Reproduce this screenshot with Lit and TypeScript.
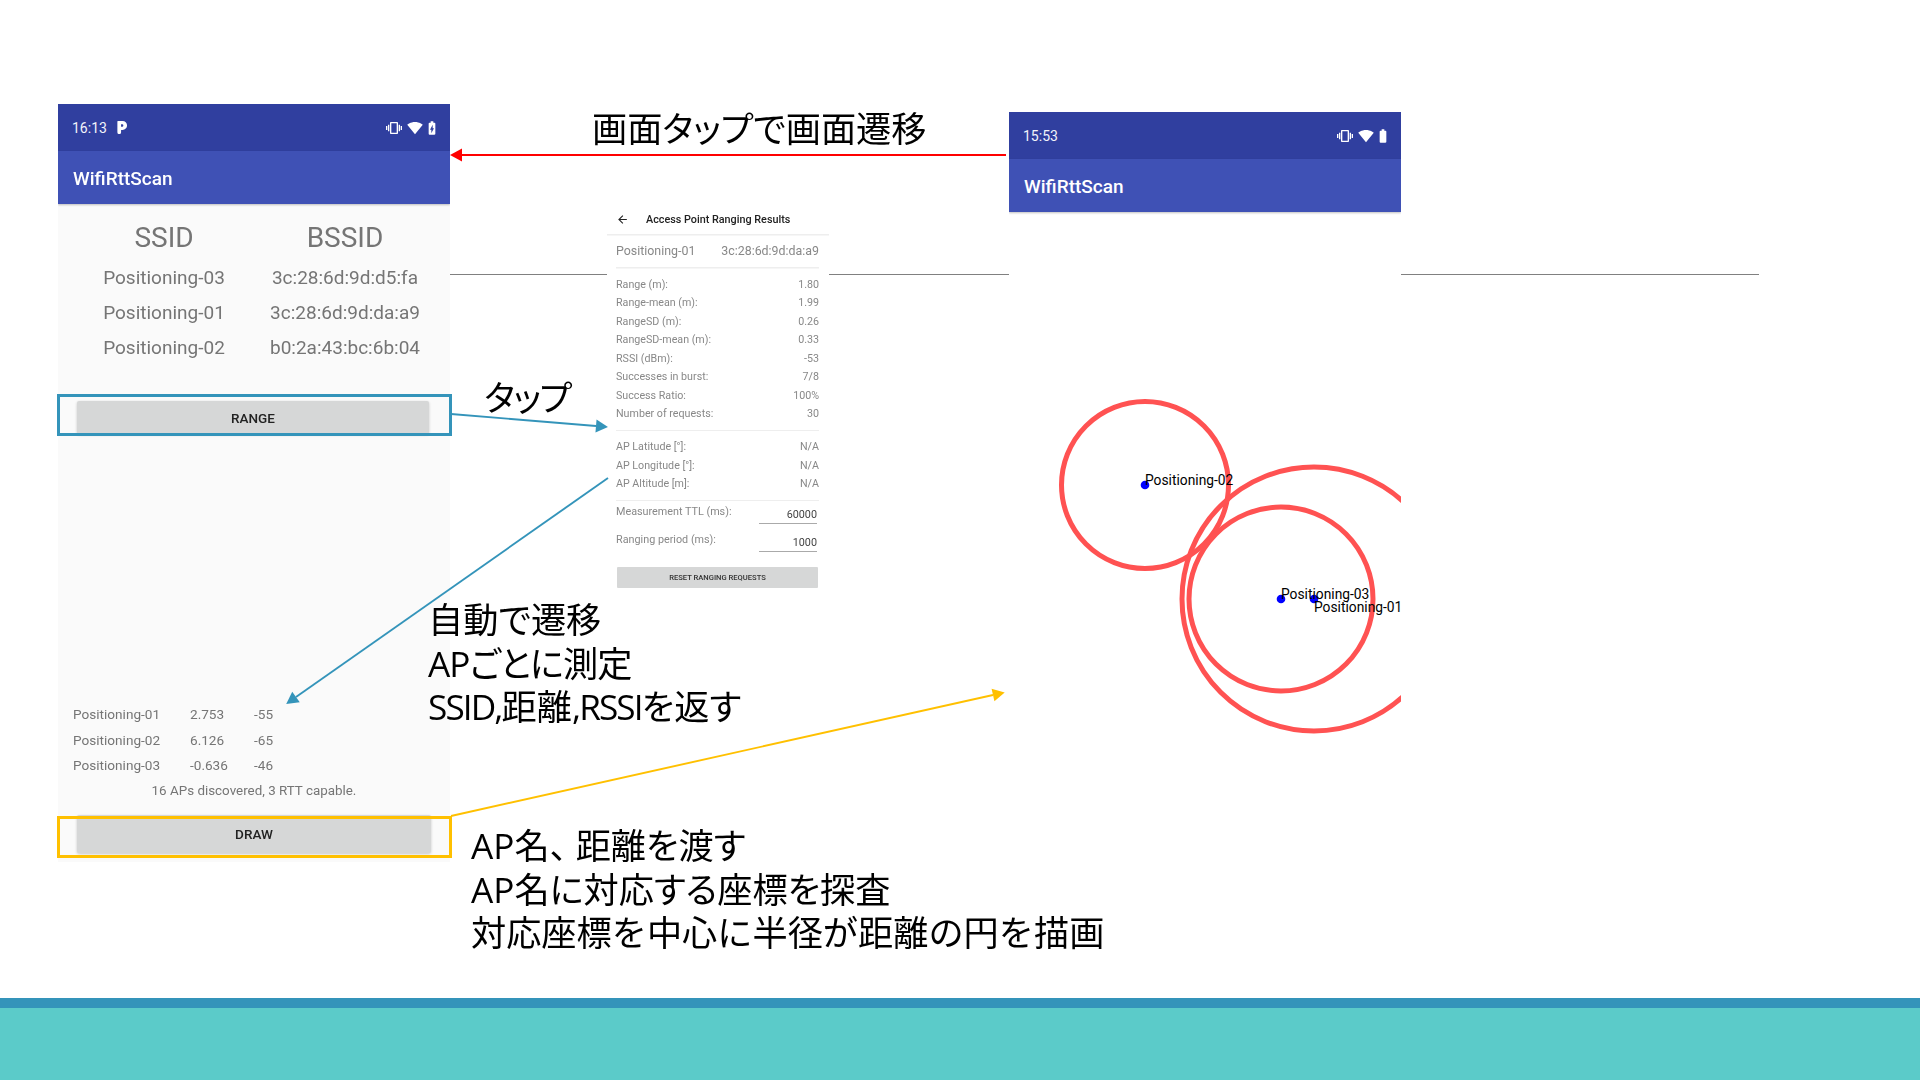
import { LitElement, css, html, svg } from 'lit';
import { customElement } from 'lit/decorators.js';

const VIBRATE = 'M0 15h2V9H0v6zm3 2h2V7H3v10zm19-8v6h2V9h-2zm-3 8h2V7h-2v10zM16.5 3h-9C6.67 3 6 3.67 6 4.5v15c0 .83.67 1.5 1.5 1.5h9c.83 0 1.5-.67 1.5-1.5v-15c0-.83-.67-1.5-1.5-1.5zM16 19H8V5h8v14z';
const WIFI = 'M12.01 21.49L23.64 7c-.45-.34-4.93-4-11.64-4C5.28 3 .81 6.66.36 7l11.63 14.49.01.01.01-.01z';
const BATTERY = 'M15.67 4H14V2h-4v2H8.33C7.6 4 7 4.6 7 5.33v15.33C7 21.4 7.6 22 8.33 22h7.33c.74 0 1.34-.6 1.34-1.33V5.33C17 4.6 16.4 4 15.67 4z';
const BOLT = 'M11 20v-5.5H9L13 7v5.5h2L11 20z';

const APS = [
  ['Positioning-03', '3c:28:6d:9d:d5:fa'],
  ['Positioning-01', '3c:28:6d:9d:da:a9'],
  ['Positioning-02', 'b0:2a:43:bc:6b:04'],
];

const RESULTS = [
  ['Positioning-01', '2.753', '-55'],
  ['Positioning-02', '6.126', '-65'],
  ['Positioning-03', '-0.636', '-46'],
];

const STATS = [
  ['Range (m):', '1.80'],
  ['Range-mean (m):', '1.99'],
  ['RangeSD (m):', '0.26'],
  ['RangeSD-mean (m):', '0.33'],
  ['RSSI (dBm):', '-53'],
  ['Successes in burst:', '7/8'],
  ['Success Ratio:', '100%'],
  ['Number of requests:', '30'],
];

const LOCATION = [
  ['AP Latitude [°]:', 'N/A'],
  ['AP Longitude [°]:', 'N/A'],
  ['AP Altitude [m]:', 'N/A'],
];

// circle centres are in the map's own coordinates (map starts at 1009,211)
const MARKS = [
  { name: 'Positioning-02', x: 136, y: 273, r: 83.5, dy: -0.5 },
  { name: 'Positioning-03', x: 272, y: 387, r: 92, dy: 0 },
  { name: 'Positioning-01', x: 305, y: 387, r: 132, dy: 13 },
];

const ARROWS = [
  { x1: 1006, y1: 155, x2: 462, y2: 155, color: '#ff0000' },
  { x1: 451, y1: 414, x2: 596, y2: 426, color: '#3494ba' },
  { x1: 608, y1: 478, x2: 296, y2: 697, color: '#3494ba' },
  { x1: 451, y1: 816, x2: 993, y2: 695, color: '#ffc000' },
];

@customElement('app-root')
export class AppRoot extends LitElement {
  private statusBar(time: string, charging: boolean) {
    return html`
      <div class="status">
        <span class="time">${time}</span>
        ${charging ? html`
          <svg class="parking" viewBox="0 0 10 12"><path fill-rule="evenodd" fill="#fff" d="M1.6 0H6a4 4 0 0 1 0 8.2H4.6v2.2a1.7 1.7 0 0 1-3.4 0V.6Q1.2 0 1.6 0zM4.6 3v2.2h1a1.1 1.1 0 0 0 0-2.2z"/></svg>
        ` : ''}
        <span class="status-icons">
          <svg class="vib" viewBox="0 0 24 24"><path fill="#fff" d=${VIBRATE}></path></svg>
          <svg class="ico" viewBox="0 0 24 24"><path fill="#fff" d=${WIFI}></path></svg>
          <svg class="batt" viewBox="0 0 24 24">
            <path fill="#fff" d=${BATTERY}></path>
            ${charging ? svg`<path fill="#303f9f" d=${BOLT}></path>` : ''}
          </svg>
        </span>
      </div>
      <div class="appbar">WifiRttScan</div>
    `;
  }

  private renderScanner() {
    return html`
      <section class="phone scanner">
        ${this.statusBar('16:13', true)}
        <div class="body">
          <div class="ap-table">
            <div class="ap-head">SSID</div>
            <div class="ap-head">BSSID</div>
            ${APS.map(([ssid, bssid]) => html`<div>${ssid}</div><div>${bssid}</div>`)}
          </div>
          <div class="btn range">RANGE</div>
          <div class="results">
            ${RESULTS.map(([name, dist, rssi]) => html`<div>${name}</div><div>${dist}</div><div>${rssi}</div>`)}
          </div>
          <div class="found">16 APs discovered, 3 RTT capable.</div>
          <div class="btn draw">DRAW</div>
        </div>
      </section>
    `;
  }

  private renderRanging() {
    return html`
      <section class="ranging">
        <div class="rng-bar">
          <svg class="back" viewBox="0 0 24 24"><path fill="#222" d="M20 11H7.83l5.59-5.59L12 4l-8 8 8 8 1.41-1.41L7.83 13H20v-2z"></path></svg>
          <span>Access Point Ranging Results</span>
        </div>
        <div class="rng-inner">
          <div class="rng-ap"><span>Positioning-01</span><span>3c:28:6d:9d:da:a9</span></div>
          <div class="rng-list first">
            ${STATS.map(([k, v]) => html`<div class="rng-row"><span>${k}</span><span>${v}</span></div>`)}
          </div>
          <div class="rng-list second">
            ${LOCATION.map(([k, v]) => html`<div class="rng-row"><span>${k}</span><span>${v}</span></div>`)}
          </div>
          <div class="rng-field"><span>Measurement TTL (ms):</span><span class="input">60000</span></div>
          <div class="rng-field"><span>Ranging period (ms):</span><span class="input">1000</span></div>
          <div class="reset">RESET RANGING REQUESTS</div>
        </div>
      </section>
    `;
  }

  private renderMap() {
    return html`
      <section class="phone map">
        ${this.statusBar('15:53', false)}
        <svg class="map-canvas" width="392" height="549" viewBox="0 0 392 549">
          ${MARKS.map(m => svg`<circle cx=${m.x} cy=${m.y} r=${m.r} fill="none" stroke="#ff5252" stroke-width="5"></circle>`)}
          ${MARKS.map(m => svg`<circle cx=${m.x} cy=${m.y} r="4.3" fill="#0000ff"></circle>`)}
          ${MARKS.map(m => svg`<text x=${m.x} y=${m.y + m.dy} class="map-label">${m.name}</text>`)}
        </svg>
      </section>
    `;
  }

  render() {
    return html`
      <main class="slide">
        <div class="rule"></div>
        ${this.renderScanner()}
        ${this.renderRanging()}
        ${this.renderMap()}

        <div class="hl hl-range"></div>
        <div class="hl hl-draw"></div>

        <svg class="arrows" width="1920" height="998" viewBox="0 0 1920 998">
          ${ARROWS.map(a => {
            const ang = Math.atan2(a.y2 - a.y1, a.x2 - a.x1);
            const len = 12;
            const wid = 6.5;
            const tipX = a.x2 + Math.cos(ang) * len;
            const tipY = a.y2 + Math.sin(ang) * len;
            const nx = -Math.sin(ang) * wid;
            const ny = Math.cos(ang) * wid;
            return svg`
              <line x1=${a.x1} y1=${a.y1} x2=${a.x2} y2=${a.y2} stroke=${a.color} stroke-width="1.9"></line>
              <polygon fill=${a.color} points="${tipX},${tipY} ${a.x2 + nx},${a.y2 + ny} ${a.x2 - nx},${a.y2 - ny}"></polygon>
            `;
          })}
        </svg>

        <div class="note note-title">画面タップで画面遷移</div>
        <div class="note note-tap">タップ</div>
        <div class="note note-auto">
          <div>自動で遷移</div>
          <div class="snug">APごとに測定</div>
          <div><span class="tight">SSID,</span>距離<span class="tight">,RSSI</span>を返す</div>
        </div>
        <div class="note note-draw">
          <div>AP名<span class="comma">、</span>距離を渡す</div>
          <div>AP名に対応する座標を探査</div>
          <div class="solid">対応座標を中心に半径が距離の円を描画</div>
        </div>
      </main>
      <footer class="band"></footer>
      <div class="sea"></div>
    `;
  }

  static styles = css`
    :host {
      display: flex;
      flex-direction: column;
      height: 1080px;
      background: #fff;
      overflow: hidden;
      font-family: Roboto, "Noto Sans", sans-serif;
    }
    .slide {
      position: relative;
      height: 998px;
      flex: none;
    }
    .band {
      height: 10px;
      background: #3494ba;
    }
    .sea {
      flex: 1;
      background: #5bcbc9;
    }

    /* free canvas: the screenshots sit on the slide like pictures */
    .rule {
      position: absolute;
      left: 450px;
      top: 274px;
      width: 1309px;
      height: 1px;
      background: #808080;
    }
    .phone {
      position: absolute;
      display: flex;
      flex-direction: column;
      width: 392px;
      overflow: hidden;
    }
    .scanner {
      left: 58px;
      top: 104px;
      height: 758px;
      filter: blur(.25px);
    }
    .map {
      left: 1009px;
      top: 112px;
      background: #fff;
    }
    .status {
      display: flex;
      align-items: center;
      flex: none;
      height: 47px;
      padding: 0 10px 0 14px;
      background: #303f9f;
      color: #f2f3fa;
      font-size: 14px;
    }
    .parking {
      width: 11px;
      height: 13px;
      margin-left: 9px;
    }
    .status-icons {
      display: flex;
      align-items: center;
      margin-left: auto;
    }
    .vib {
      width: 16px;
      height: 16px;
    }
    .ico {
      width: 16px;
      height: 16px;
      margin-left: 5px;
    }
    .batt {
      width: 16px;
      height: 16px;
      margin-left: 1px;
    }
    .appbar {
      display: flex;
      align-items: center;
      flex: none;
      height: 53px;
      box-sizing: border-box;
      padding: 2px 0 0 15px;
      background: #3f51b5;
      color: #fff;
      font-size: 19px;
      font-weight: 500;
      box-shadow: 0 1px 2px rgba(0, 0, 0, .25);
      position: relative;
    }
    .body {
      display: flex;
      flex-direction: column;
      flex: 1;
      background: #fafafa;
      color: #757575;
    }
    .ap-table {
      display: grid;
      grid-template-columns: 212px 150px;
      grid-template-rows: 45px repeat(3, 35px);
      align-items: center;
      justify-items: center;
      padding-top: 11px;
      font-size: 19px;
    }
    .ap-table > .ap-head {
      font-size: 28px;
    }
    .btn {
      display: flex;
      align-items: center;
      justify-content: center;
      background: #d6d7d7;
      color: #222;
      font-size: 13.5px;
      font-weight: 500;
      border-radius: 2px;
      box-shadow: 0 1px 3px rgba(0, 0, 0, .2);
    }
    .range {
      width: 352px;
      height: 33px;
      margin: 36px 0 0 19px;
    }
    .results {
      display: grid;
      grid-template-columns: 117px 64px auto;
      grid-auto-rows: 25.5px;
      align-items: center;
      margin-top: auto;
      padding-left: 15px;
      font-size: 13.6px;
    }
    .found {
      height: 25px;
      line-height: 25px;
      text-align: center;
      font-size: 13.4px;
    }
    .draw {
      width: 354px;
      height: 38px;
      margin: 12px 0 9px 19px;
    }

    .ranging {
      position: absolute;
      left: 607px;
      top: 204px;
      width: 222px;
      height: 390px;
      background: #fff;
      color: #888;
      filter: blur(.35px);
    }
    .rng-bar {
      display: flex;
      align-items: center;
      height: 30px;
      padding-left: 9px;
      border-bottom: 1px solid #eee;
      box-shadow: 0 1px 0 #f6f6f6;
      color: #222;
      font-size: 10.8px;
      font-weight: 500;
    }
    .back {
      width: 13px;
      height: 13px;
      margin-right: 17px;
    }
    .rng-inner {
      padding: 0 10px 0 9px;
    }
    .rng-ap {
      display: flex;
      justify-content: space-between;
      height: 32px;
      line-height: 32px;
      font-size: 12.4px;
      border-bottom: 1px solid #eee;
      box-shadow: 0 1px 0 #f6f6f6;
    }
    .rng-list {
      padding: 7.5px 0 6px;
      border-bottom: 1px solid #eee;
      font-size: 10.7px;
    }
    .rng-row {
      display: flex;
      justify-content: space-between;
      height: 18.5px;
      line-height: 18.5px;
    }
    .rng-field {
      display: flex;
      justify-content: space-between;
      height: 28px;
      padding-top: 4px;
      box-sizing: border-box;
      font-size: 10.8px;
      line-height: 14px;
    }
    .input {
      display: block;
      width: 58px;
      height: 18px;
      margin: 1px 2px 0 0;
      box-sizing: border-box;
      border-bottom: 1px solid #aaa;
      line-height: 18px;
      text-align: right;
      color: #444;
    }
    .reset {
      display: flex;
      align-items: center;
      justify-content: center;
      height: 21px;
      margin: 10px 1px 0 1px;
      background: #d6d7d7;
      color: #333;
      font-size: 7.6px;
      font-weight: 500;
      border-radius: 1px;
    }

    .map-canvas {
      display: block;
    }
    .map-label {
      font-family: Roboto, sans-serif;
      font-size: 13.8px;
      fill: #000;
    }

    /* overlays: highlight boxes, arrows and the slide's captions */
    .hl {
      position: absolute;
      box-sizing: border-box;
      left: 57px;
      width: 395px;
      height: 42px;
      border: 3px solid #3494ba;
    }
    .hl-range {
      top: 394px;
    }
    .hl-draw {
      top: 816px;
      border-color: #ffc000;
    }
    .arrows {
      position: absolute;
      left: 0;
      top: 0;
    }
    .note {
      position: absolute;
      white-space: nowrap;
      color: #000;
      font-family: "Open Sans", "Noto Sans CJK JP", sans-serif;
      font-size: 35.2px;
      font-feature-settings: "palt";
      line-height: 43.5px;
    }
    .solid {
      font-feature-settings: normal;
    }
    .comma {
      font-feature-settings: normal;
      letter-spacing: -.26em;
    }
    .tight {
      letter-spacing: -.054em;
    }
    .snug {
      letter-spacing: -.025em;
    }
    .note-title {
      left: 592px;
      top: 107px;
    }
    .note-tap {
      left: 484px;
      top: 376px;
      letter-spacing: -.04em;
    }
    .note-auto {
      left: 428px;
      top: 598px;
    }
    .note-draw {
      left: 471px;
      top: 824px;
    }
  `;
}

declare global {
  interface HTMLElementTagNameMap {
    'app-root': AppRoot
  }
}
